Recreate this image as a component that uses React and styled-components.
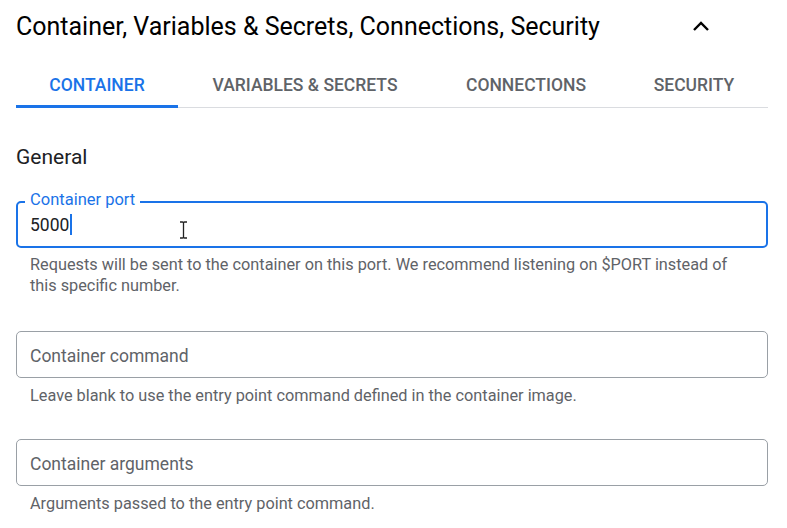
import React from "react";
import styled, { createGlobalStyle } from "styled-components";

const Global = createGlobalStyle`
  html, body { margin: 0; padding: 0; background: #fff; }
  body { font-family: Roboto, "Noto Sans", sans-serif; color: #202124; }
`;

const Page = styled.div`
  width: 787px;
  height: 528px;
  overflow: hidden;
  padding: 0 19px 0 16px;
  box-sizing: border-box;
`;

const Header = styled.div`
  display: flex;
  align-items: center;
  justify-content: space-between;
  height: 52px;
  padding-right: 58px;
`;

const Title = styled.h2`
  margin: 0;
  font-size: 25px;
  font-weight: 400;
  color: #000;
  letter-spacing: 0;
`;

const Tabs = styled.div`
  display: flex;
  margin-top: 11px;
  border-bottom: 1px solid #dadce0;
`;

const Tab = styled.div`
  position: relative;
  width: ${(p) => p.w}px;
  height: 44px;
  display: flex;
  align-items: center;
  justify-content: center;
  font-size: 17.5px;
  font-weight: 500;
  letter-spacing: 0;
  color: ${(p) => (p.active ? "#1a73e8" : "#5f6368")};
  &::after {
    content: "";
    position: absolute;
    left: 0;
    right: 0;
    bottom: -1px;
    height: 3px;
    background: ${(p) => (p.active ? "#1a73e8" : "transparent")};
  }
`;

const Section = styled.h3`
  margin: 37px 0 0;
  font-size: 21px;
  font-weight: 400;
  color: #202124;
  line-height: 24px;
`;

const Field = styled.div`
  position: relative;
  margin-top: ${(p) => p.mt}px;
  height: 47px;
  border: ${(p) => (p.focused ? "2px solid #1a73e8" : "1px solid #9aa0a6")};
  border-radius: 5px;
  box-sizing: border-box;
  display: flex;
  align-items: center;
  padding-left: ${(p) => (p.focused ? 12 : 13)}px;
  padding-top: ${(p) => (p.focused ? 0 : 2)}px;
`;

const FloatLabel = styled.span`
  position: absolute;
  top: -12px;
  left: 7px;
  padding: 0 5px;
  background: #fff;
  font-size: 16.5px;
  color: #1a73e8;
  line-height: 18px;
`;

const Value = styled.span`
  font-size: 17.5px;
  color: #202124;
  display: flex;
  align-items: center;
`;

const Caret = styled.span`
  display: inline-block;
  width: 1.5px;
  height: 21px;
  background: #1a73e8;
  margin-left: 1px;
`;

const Placeholder = styled.span`
  font-size: 17.5px;
  color: #5f6368;
`;

const Helper = styled.p`
  margin: ${(p) => p.mt}px 0 0;
  padding-left: 14px;
  padding-right: 20px;
  font-size: 16.3px;
  line-height: 21px;
  color: #5f6368;
`;

const Cursor = styled.svg`
  position: absolute;
  left: 161px;
  top: 18px;
`;

export default function App() {
  return (
    <Page>
      <Global />
      <Header>
        <Title>Container, Variables &amp; Secrets, Connections, Security</Title>
        <svg width="18" height="12" viewBox="0 0 18 12">
          <path d="M2 10 L9 3 L16 10" fill="none" stroke="#000" strokeWidth="2.4" />
        </svg>
      </Header>
      <Tabs>
        <Tab active w={162}>CONTAINER</Tab>
        <Tab w={254}>VARIABLES &amp; SECRETS</Tab>
        <Tab w={188}>CONNECTIONS</Tab>
        <Tab w={148}>SECURITY</Tab>
      </Tabs>
      <Section>General</Section>
      <Field focused mt={32}>
        <FloatLabel>Container port</FloatLabel>
        <Value>
          5000<Caret />
        </Value>
        <Cursor width="9" height="18" viewBox="0 0 9 18">
          <path d="M1 1 H3.5 Q4.5 1 4.5 2 V16 Q4.5 17 3.5 17 H1 M8 1 H5.5 Q4.5 1 4.5 2 M4.5 16 Q4.5 17 5.5 17 H8" fill="none" stroke="#222" strokeWidth="1.3" />
        </Cursor>
      </Field>
      <Helper mt={6}>
        Requests will be sent to the container on this port. We recommend listening on $PORT instead of this specific number.
      </Helper>
      <Field mt={35}>
        <Placeholder>Container command</Placeholder>
      </Field>
      <Helper mt={7}>Leave blank to use the entry point command defined in the container image.</Helper>
      <Field mt={33}>
        <Placeholder>Container arguments</Placeholder>
      </Field>
      <Helper mt={7}>Arguments passed to the entry point command.</Helper>
    </Page>
  );
}
